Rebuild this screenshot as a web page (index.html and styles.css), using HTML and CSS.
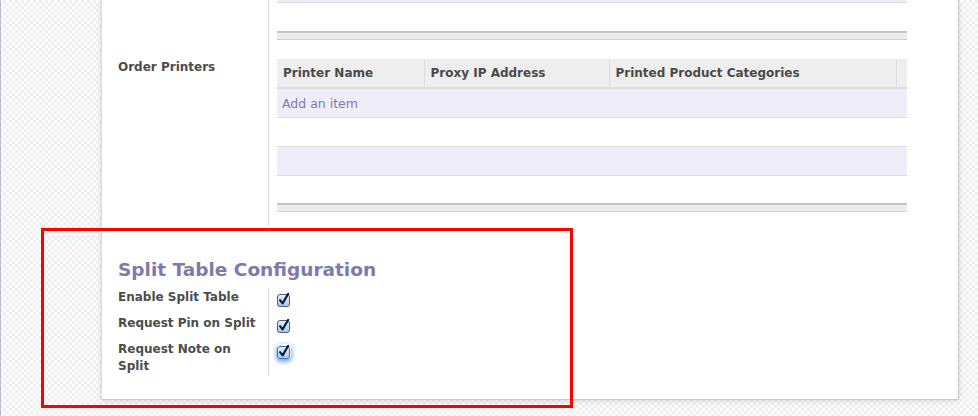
FILE: index.html
```html
<!DOCTYPE html>
<html>
<head>
<meta charset="utf-8">
<link rel="stylesheet" href="styles.css">
</head>
<body>
<div class="page">
  <div class="edge"></div>
  <div class="sheet">
    <div class="group">
      <div class="labels">
        <div class="label order-label">Order Printers</div>
      </div>
      <div class="fields">
        <div class="prev-list">
          <div class="prev-row"></div>
          <div class="prev-empty"></div>
          <div class="list-foot"></div>
        </div>
        <table class="list">
          <colgroup>
            <col class="c1"><col class="c2"><col class="c3"><col class="c4">
          </colgroup>
          <thead>
            <tr><th>Printer Name</th><th>Proxy IP Address</th><th>Printed Product Categories</th><th></th></tr>
          </thead>
          <tbody>
            <tr class="odd"><td colspan="4" class="add">Add an item</td></tr>
            <tr class="even"><td colspan="4"></td></tr>
            <tr class="odd"><td colspan="4"></td></tr>
            <tr class="even last"><td colspan="4"></td></tr>
          </tbody>
        </table>
        <div class="list-foot"></div>
      </div>
    </div>

    <h2 class="sep">Split Table Configuration</h2>

    <div class="form">
      <div class="row">
        <div class="flabel">Enable Split Table</div>
        <div class="fval"><span class="cb"><svg width="14" height="15" viewBox="0 0 14 15"><defs><linearGradient id="g1" x1="0" y1="0" x2="0" y2="1"><stop offset="0" stop-color="#e4f2fd"/><stop offset="1" stop-color="#9ccbf2"/></linearGradient></defs><rect x="0.5" y="2.5" width="12" height="12" rx="2.5" fill="url(#g1)" stroke="#4e5f80"/><path d="M3 8.2 L5.6 11.4 L11.2 1.8" fill="none" stroke="#0f1628" stroke-width="2.1" stroke-linecap="round" stroke-linejoin="round"/></svg></span></div>
      </div>
      <div class="row">
        <div class="flabel">Request Pin on Split</div>
        <div class="fval"><span class="cb"><svg width="14" height="15" viewBox="0 0 14 15"><rect x="0.5" y="2.5" width="12" height="12" rx="2.5" fill="url(#g1)" stroke="#4e5f80"/><path d="M3 8.2 L5.6 11.4 L11.2 1.8" fill="none" stroke="#0f1628" stroke-width="2.1" stroke-linecap="round" stroke-linejoin="round"/></svg></span></div>
      </div>
      <div class="row">
        <div class="flabel">Request Note on Split</div>
        <div class="fval"><span class="cb focus"><svg width="14" height="15" viewBox="0 0 14 15"><rect x="0.5" y="2.5" width="12" height="12" rx="2.5" fill="url(#g1)" stroke="#3f6fb0"/><path d="M3 8.2 L5.6 11.4 L11.2 1.8" fill="none" stroke="#0f1628" stroke-width="2.1" stroke-linecap="round" stroke-linejoin="round"/></svg></span></div>
      </div>
    </div>
  </div>
  <div class="annot"></div>
</div>
</body>
</html>
```

FILE: styles.css
```css
html, body {
  margin: 0;
  padding: 0;
}
body {
  width: 978px;
  height: 416px;
  overflow: hidden;
  background-color: #fbfbfb;
  background-image: repeating-conic-gradient(#f0f0f0 0 25%, #fbfbfb 0 50%);
  background-size: 6px 6px;
  font-family: "DejaVu Sans", "Noto Sans", sans-serif;
  color: #4c4c4c;
}
.page {
  position: relative;
  display: flex;
  align-items: flex-start;
  height: 416px;
}
.edge {
  width: 1px;
  height: 416px;
  background: #bcbcc8;
  margin-right: 100px;
}
.sheet {
  width: 858px;
  height: 400px;
  background: #ffffff;
  border-left: 1px solid #d9d7e2;
  border-right: 1px solid #c9c6d8;
  border-bottom: 1px solid #c9c6d8;
  box-shadow: 0 1px 5px rgba(0, 0, 0, 0.14);
  box-sizing: border-box;
  padding-left: 16px;
}
.group {
  display: grid;
  grid-template-columns: 150px 1fr;
}
.labels {
  padding-top: 59px;
}
.label {
  font-size: 12px;
  font-weight: bold;
  line-height: 17px;
}
.fields {
  border-left: 1px solid #dcdcdc;
  padding: 0 52px 14px 8px;
}
.prev-row {
  height: 2px;
  background: #eeedf7;
  border-bottom: 1px solid #dcdcdc;
}
.prev-empty {
  height: 28px;
}
.list-foot {
  height: 6px;
  background: #ececec;
  border-top: 2px solid #c4c4c4;
  border-bottom: 1px solid #d2d2d2;
}
.prev-list {
  margin-bottom: 19px;
}
.list {
  width: 630px;
  table-layout: fixed;
  border-collapse: collapse;
  border-spacing: 0;
}
.c1 { width: 147px; }
.c2 { width: 185px; }
.c3 { width: 287px; }
.c4 { width: 11px; }
.list th {
  background: #eeeeee;
  text-align: left;
  font-size: 12px;
  font-weight: bold;
  line-height: 17px;
  padding: 6px 6px 5px;
  border-right: 1px solid #dcdcdc;
  border-bottom: 2px solid #dedede;
  white-space: nowrap;
  overflow: hidden;
  color: #4a4a4a;
}
.list th:last-child {
  border-right: none;
}
.list td {
  height: 29px;
  padding: 0 5px;
  box-sizing: border-box;
  border-bottom: 1px solid #dcdcdc;
  font-size: 12.5px;
  line-height: 17px;
}
.list tr.last td {
  height: 28px;
  border-bottom: none;
}
.list tr.odd td {
  background: #efeef8;
}
.list td.add {
  color: #7c7bad;
  padding-top: 1px;
}
.sep {
  margin: 32px 0 6px 0;
  font-size: 18.5px;
  line-height: 24px;
  font-weight: bold;
  color: #7c7bad;
}
.form {
  display: grid;
  grid-template-columns: 150px 1fr;
}
.row {
  display: contents;
}
.flabel {
  font-size: 12px;
  font-weight: bold;
  line-height: 17px;
  padding: 1px 12px 8px 0;
}
.row:last-child .flabel {
  padding-bottom: 1px;
}
.fval {
  border-left: 1px solid #dcdcdc;
  padding-left: 8px;
}
.cb {
  display: inline-block;
  width: 14px;
  height: 15px;
  margin-top: 4px;
  border-radius: 3px;
}
.cb svg {
  display: block;
}
.cb.focus {
  box-shadow: 0 2px 4px 1px rgba(70, 140, 230, 0.75);
  border-radius: 4px;
}
.annot {
  position: absolute;
  left: 41px;
  top: 228px;
  width: 532px;
  height: 180px;
  box-sizing: border-box;
  border: 3px solid #ff0000;
}
```
